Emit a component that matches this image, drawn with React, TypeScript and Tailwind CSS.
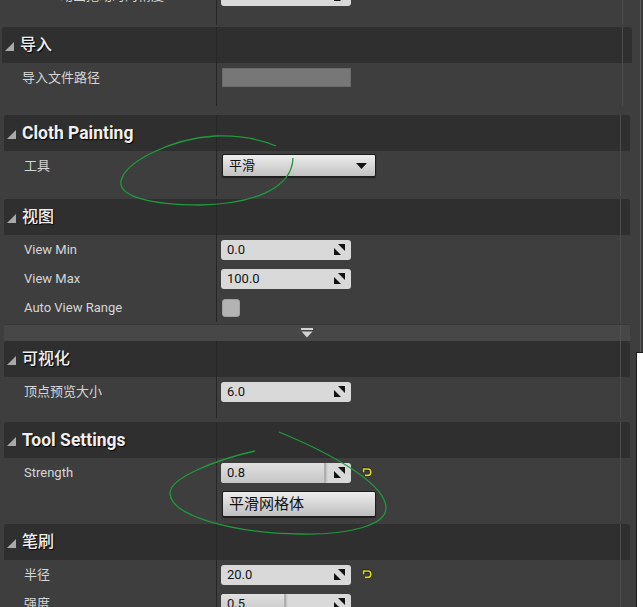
import React from 'react';

const COLS_A = 'grid grid-cols-[215px_1fr_10px]';
const COLS_B = 'grid grid-cols-[213px_1fr_10px]';

const SpinIcon = () => (
  <svg width="11" height="11" viewBox="0 0 11 11" className="shrink-0">
    <polygon points="4,0 11,0 11,7" fill="#111" />
    <polygon points="0,4 0,11 7,11" fill="#111" />
  </svg>
);

const ResetIcon = () => (
  <svg width="10" height="11" viewBox="0 0 10 11" className="shrink-0">
    <path d="M1.6 5.2 V2 H6 Q8.8 2 8.8 5.2 Q8.8 8.4 6 8.4 H3" fill="none" stroke="#1a1a00" strokeWidth="3" />
    <path d="M1.6 5.2 V2 H6 Q8.8 2 8.8 5.2 Q8.8 8.4 6 8.4 H3" fill="none" stroke="#dcd82c" strokeWidth="1.7" />
  </svg>
);

const HeaderArrow = () => (
  <svg width="9" height="9" viewBox="0 0 9 9" className="shrink-0 mt-[3px]">
    <polygon points="0,9 9,9 9,0" fill="#a9a9a9" />
  </svg>
);

const NumInput = ({ value, fill }: { value: string; fill?: number }) => (
  <div className="relative w-[130px] h-[20px] rounded-[3px] bg-[#d9d9d9] flex items-center overflow-hidden">
    {fill != null && (
      <div
        className="absolute left-0 top-0 bottom-0 bg-gradient-to-b from-[#e0e0e0] to-[#c6c6c6] border-r border-[#b0b0b0] shadow-[1px_0_2px_rgba(0,0,0,0.3)]"
        style={{ width: fill }}
      />
    )}
    <span className="relative flex-1 pl-[6px] text-[13px] text-[#141414]">{value}</span>
    <span className="relative mr-[6px] flex">
      <SpinIcon />
    </span>
  </div>
);

const Header = ({ title, first, latin }: { title: string; first?: boolean; latin?: boolean }) => (
  <div className={`${first ? COLS_A : COLS_B} h-[36px] bg-[#2f2f2f] rounded-t-[3px]`}>
    <div className="border-r border-[#262626] flex items-center pl-[3px]">
      <HeaderArrow />
      <span
        className={`ml-[6px] text-[#efefef] [text-shadow:1px_1px_1px_rgba(0,0,0,0.95)] ${
          latin ? 'text-[17.5px] font-bold' : 'text-[16px] font-medium'
        }`}
      >
        {title}
      </span>
    </div>
    <div />
    <div className="border-l border-[#4c4c4c]" />
  </div>
);

const Row = ({
  label,
  first,
  h = 'h-[29px]',
  children,
}: {
  label?: string;
  first?: boolean;
  h?: string;
  children?: React.ReactNode;
}) => (
  <div className={`${first ? COLS_A : COLS_B} ${h}`}>
    <div className="border-r border-[#262626] flex items-center pl-5 text-[13px] text-[#d6d6d6]">{label}</div>
    <div className="flex items-center pl-1 gap-[11px]">{children}</div>
    <div className="border-l border-[#4c4c4c]" />
  </div>
);

const Spacer = ({ h, first }: { h: string; first?: boolean }) => <Row first={first} h={h} />;

export default function App() {
  return (
    <div className="relative w-[643px] h-[607px] overflow-hidden bg-[#3e3e3e] flex items-start font-['Roboto','Noto_Sans_CJK_SC',sans-serif] select-none">
      <div className="w-[636px] flex flex-col shrink-0">
        {/* cut-off row above */}
        <div className="shrink-0 ml-[2px] w-[630px] -mt-[19px]">
          <div className={`${COLS_A} h-[29px]`}>
            <div className="border-r border-[#262626] flex items-center pl-[58px] text-[13px] text-[#d6d6d6]">动画拖动时的精度</div>
            <div className="flex items-center pl-1">
              <NumInput value="1.0" />
            </div>
            <div className="border-l border-[#4c4c4c]" />
          </div>
          <Spacer first h="h-[15px]" />
        </div>

        {/* 导入 */}
        <div className="shrink-0 ml-[2px] w-[630px] mt-[2px]">
          <Header first title="导入" />
          <Row first label="导入文件路径">
            <div className="w-[129px] h-[19px] bg-[#777777] border border-[#6a6a6a] ml-px" />
          </Row>
          <Spacer first h="h-[14px]" />
        </div>

        {/* Cloth Painting */}
        <div className="shrink-0 ml-[4px] w-[626px] mt-[9px]">
          <Header latin title="Cloth Painting" />
          <Row label="工具">
            <div className="ml-px w-[154px] h-[23px] rounded-[2px] border border-[#1d1d1d] bg-gradient-to-b from-[#ededed] to-[#c2c2c2] shadow-[0_1px_1px_rgba(0,0,0,0.5)] flex items-center justify-between pl-[6px] pr-[8px]">
              <span className="text-[13px] text-[#111]">平滑</span>
              <svg width="11" height="6" viewBox="0 0 11 6">
                <polygon points="0,0 11,0 5.5,6" fill="#111" />
              </svg>
            </div>
          </Row>
          <Spacer h="h-[16px]" />
        </div>

        {/* 视图 */}
        <div className="shrink-0 ml-[4px] w-[626px] mt-[3px]">
          <Header title="视图" />
          <Row label="View Min">
            <NumInput value="0.0" />
          </Row>
          <Row label="View Max">
            <NumInput value="100.0" />
          </Row>
          <Row label="Auto View Range">
            <div className="ml-px w-[18px] h-[18px] rounded-[3px] bg-[#b3b3b3] border border-[#a0a0a0]" />
          </Row>
        </div>

        {/* expander bar */}
        <div className="shrink-0 ml-[4px] w-[626px] mt-[2px] h-[17px] bg-[#474747] border-t border-[#383838] grid grid-cols-[1fr_10px]">
          <div className="flex items-center pl-[297px]">
            <svg width="12" height="10" viewBox="0 0 12 10">
              <rect x="0" y="0" width="12" height="2" fill="#d2d2d2" />
              <polygon points="0.5,3.5 11.5,3.5 6,9.5" fill="#d2d2d2" />
            </svg>
          </div>
          <div className="border-l border-[#525252]" />
        </div>

        {/* 可视化 */}
        <div className="shrink-0 ml-[4px] w-[626px]">
          <Header title="可视化" />
          <Row label="顶点预览大小">
            <NumInput value="6.0" />
          </Row>
          <Spacer h="h-[12px]" />
        </div>

        {/* Tool Settings */}
        <div className="shrink-0 ml-[4px] w-[626px] mt-[4px]">
          <Header latin title="Tool Settings" />
          <Row label="Strength">
            <NumInput value="0.8" fill={104} />
            <ResetIcon />
          </Row>
          <Row h="h-[34px]">
            <div className="ml-px w-[154px] h-[26px] rounded-[2px] border border-[#1d1d1d] bg-gradient-to-b from-[#ededed] to-[#bfbfbf] shadow-[0_1px_1px_rgba(0,0,0,0.5)] flex items-center pl-[6px]">
              <span className="text-[15px] text-[#111]">平滑网格体</span>
            </div>
          </Row>
        </div>

        {/* 笔刷 */}
        <div className="shrink-0 ml-[4px] w-[626px] mt-[3px]">
          <Header title="笔刷" />
          <Row label="半径">
            <NumInput value="20.0" />
            <ResetIcon />
          </Row>
          <Row label="强度">
            <NumInput value="0.5" fill={64} />
          </Row>
        </div>
      </div>

      {/* right edge */}
      <div className="w-[7px] h-[607px] flex flex-col">
        <div className="h-[352px] flex">
          <div className="w-[4px]" />
          <div className="w-px bg-[#5c5c5c]" />
          <div className="flex-1 bg-[#393939]" />
        </div>
        <div className="flex-1 bg-white border-l border-t border-[#1c1c1c]" />
      </div>

      {/* hand-drawn green annotations */}
      <svg className="absolute inset-0 pointer-events-none" width="643" height="607" viewBox="0 0 643 607">
        <path
          d="M293 158 C292 190 250 204 200 205 C150 205 118 196 121 181 C125 162 170 139 215 136 C240 135 262 140 276 146"
          fill="none"
          stroke="#1f9a3c"
          strokeWidth="1.3"
        />
        <path
          d="M255 451 C215 460 170 478 170 493 C170 515 230 533 300 534 C350 535 386 525 386 508 C386 485 335 455 279 432"
          fill="none"
          stroke="#1f9a3c"
          strokeWidth="1.3"
        />
      </svg>
    </div>
  );
}
